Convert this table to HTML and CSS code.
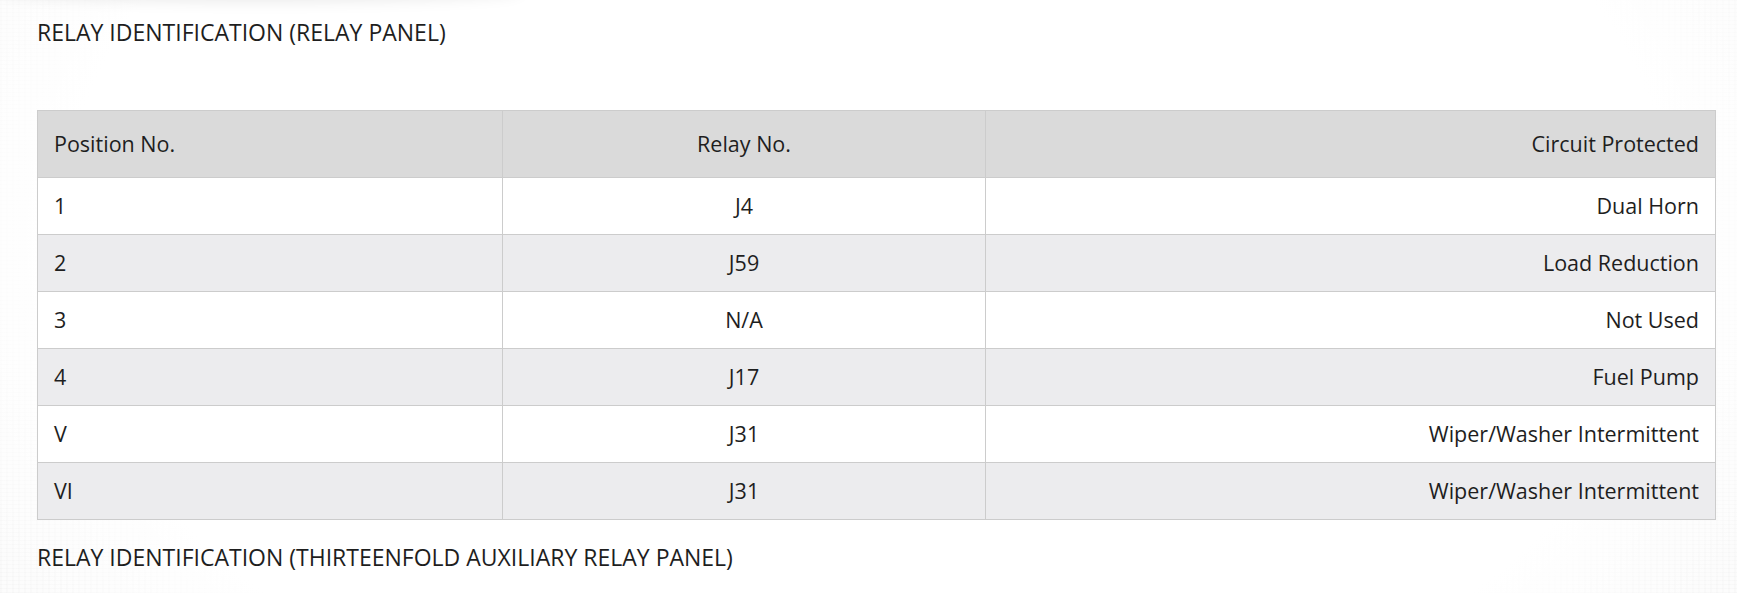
FILE: index.html
```html
<!DOCTYPE html>
<html lang="en">
<head>
<meta charset="utf-8">
<title>Relay Identification</title>
<link rel="stylesheet" href="styles.css">
</head>
<body>
<div class="page">
  <div class="shadow"></div>
  <p class="section-title">RELAY IDENTIFICATION (RELAY PANEL)</p>
  <table class="relay-table">
    <colgroup>
      <col class="col-pos">
      <col class="col-relay">
      <col class="col-circuit">
    </colgroup>
    <thead>
      <tr>
        <th class="left">Position No.</th>
        <th class="center">Relay No.</th>
        <th class="right">Circuit Protected</th>
      </tr>
    </thead>
    <tbody>
      <tr><td class="left">1</td><td class="center">J4</td><td class="right">Dual Horn</td></tr>
      <tr><td class="left">2</td><td class="center">J59</td><td class="right">Load Reduction</td></tr>
      <tr><td class="left">3</td><td class="center">N/A</td><td class="right">Not Used</td></tr>
      <tr><td class="left">4</td><td class="center">J17</td><td class="right">Fuel Pump</td></tr>
      <tr><td class="left">V</td><td class="center">J31</td><td class="right">Wiper/Washer Intermittent</td></tr>
      <tr><td class="left">VI</td><td class="center">J31</td><td class="right">Wiper/Washer Intermittent</td></tr>
    </tbody>
  </table>
  <p class="section-title second">RELAY IDENTIFICATION (THIRTEENFOLD AUXILIARY RELAY PANEL)</p>
</div>
</body>
</html>
```

FILE: styles.css
```css
html, body {
  margin: 0;
  padding: 0;
}

body {
  width: 1737px;
  height: 593px;
  overflow: hidden;
  font-family: "Open Sans", "Noto Sans", sans-serif;
  color: #1e1e1e;
  background-color: #fbfbfb;
  background-image:
    radial-gradient(ellipse 62% 120% at 50% 40%, #ffffff 75%, rgba(255,255,255,0) 100%),
    repeating-linear-gradient(0deg, rgba(0,0,0,0.018) 0px, rgba(0,0,0,0.018) 1px, rgba(0,0,0,0) 1px, rgba(0,0,0,0) 4px),
    repeating-linear-gradient(90deg, rgba(0,0,0,0.014) 0px, rgba(0,0,0,0.014) 2px, rgba(0,0,0,0) 2px, rgba(0,0,0,0) 6px);
}

.page {
  position: relative;
  padding: 17px 22px 0 37px;
}

.shadow {
  position: absolute;
  left: 0;
  top: -20px;
  width: 520px;
  height: 20px;
  box-shadow: 0 0 16px rgba(0, 0, 0, 0.1);
  border-radius: 0 0 50% 50%;
}

.section-title {
  margin: 0;
  font-size: 23px;
  line-height: 30px;
}

.section-title.second {
  margin-top: 22px;
}

.relay-table {
  margin-top: 63px;
  width: 1678px;
  border-collapse: collapse;
  table-layout: fixed;
  font-size: 21.5px;
  border: 1px solid #cccccc;
}

.col-pos { width: 465px; }
.col-relay { width: 483px; }
.col-circuit { width: 730px; }

.relay-table th,
.relay-table td {
  border: 1px solid #cccccc;
  padding: 0 16px;
  font-weight: normal;
  line-height: 24px;
}

.relay-table thead tr {
  height: 67px;
  background: #dadada;
}

.relay-table tbody tr {
  height: 57px;
  background: #ffffff;
}

.relay-table tbody tr:nth-child(even) {
  background: #ececee;
}

.left { text-align: left; }
.center { text-align: center; }
.right { text-align: right; }
```
